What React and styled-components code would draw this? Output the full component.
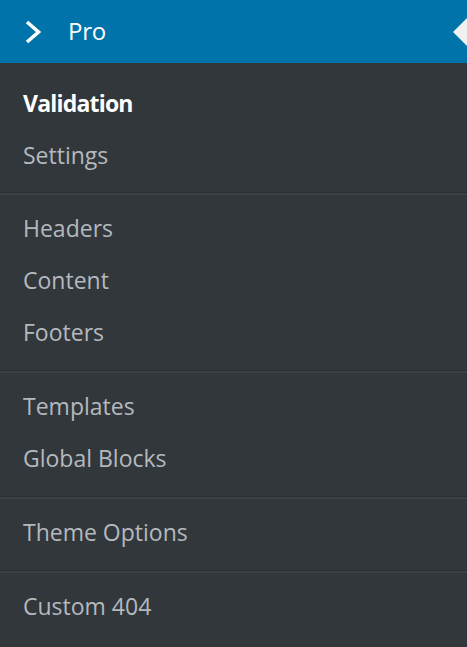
import React from "react";
import styled, { createGlobalStyle } from "styled-components";

const GlobalStyle = createGlobalStyle`
  html, body {
    margin: 0;
    padding: 0;
    background: #32373c;
  }
  body {
    font-family: "Open Sans", "Noto Sans", "Liberation Sans", sans-serif;
  }
`;

const Menu = styled.nav`
  width: 467px;
  min-height: 647px;
  background: #32373c;
`;

const Header = styled.div`
  position: relative;
  display: flex;
  align-items: center;
  height: 63px;
  background: #0073aa;
  color: #fff;
`;

const IconBox = styled.span`
  display: flex;
  align-items: center;
  justify-content: center;
  width: 68px;
  height: 100%;
`;

const Title = styled.span`
  font-size: 24px;
  letter-spacing: -0.3px;
  line-height: 1;
  padding-bottom: 2px;
`;

const Pointer = styled.span`
  position: absolute;
  right: 0;
  top: 18px;
  width: 0;
  height: 0;
  border-top: 14px solid transparent;
  border-bottom: 14px solid transparent;
  border-right: 14px solid #f1f1f1;
`;

const Group = styled.ul`
  list-style: none;
  margin: 0;
  padding: ${(p) => (p.$first ? "14px 0 11px" : "9px 0 12px")};
  border-top: ${(p) => (p.$first ? "none" : "1px solid #2a2e32")};
  box-shadow: ${(p) => (p.$first ? "none" : "inset 0 2px 0 #3b4045")};
`;

const Item = styled.li`
  display: flex;
  align-items: center;
  height: 52px;
  padding-left: 23px;
  font-size: 23px;
  letter-spacing: ${(p) => (p.$active ? "-0.8px" : "0")};
  color: ${(p) => (p.$active ? "#ffffff" : "#b4b9be")};
  font-weight: ${(p) => (p.$active ? 700 : 400)};
`;

const groups = [
  [{ label: "Validation", active: true }, { label: "Settings" }],
  [{ label: "Headers" }, { label: "Content" }, { label: "Footers" }],
  [{ label: "Templates" }, { label: "Global Blocks" }],
  [{ label: "Theme Options" }],
  [{ label: "Custom 404" }],
];

export default function App() {
  return (
    <>
      <GlobalStyle />
      <Menu>
        <Header>
          <IconBox>
            <svg width="20" height="24" viewBox="0 0 20 24">
              <polyline
                points="3,2 14.5,12 3,22"
                fill="none"
                stroke="#fff"
                strokeWidth="3.6"
              />
            </svg>
          </IconBox>
          <Title>Pro</Title>
          <Pointer />
        </Header>
        {groups.map((g, i) => (
          <Group key={i} $first={i === 0}>
            {g.map((it) => (
              <Item key={it.label} $active={it.active}>
                {it.label}
              </Item>
            ))}
          </Group>
        ))}
      </Menu>
    </>
  );
}
